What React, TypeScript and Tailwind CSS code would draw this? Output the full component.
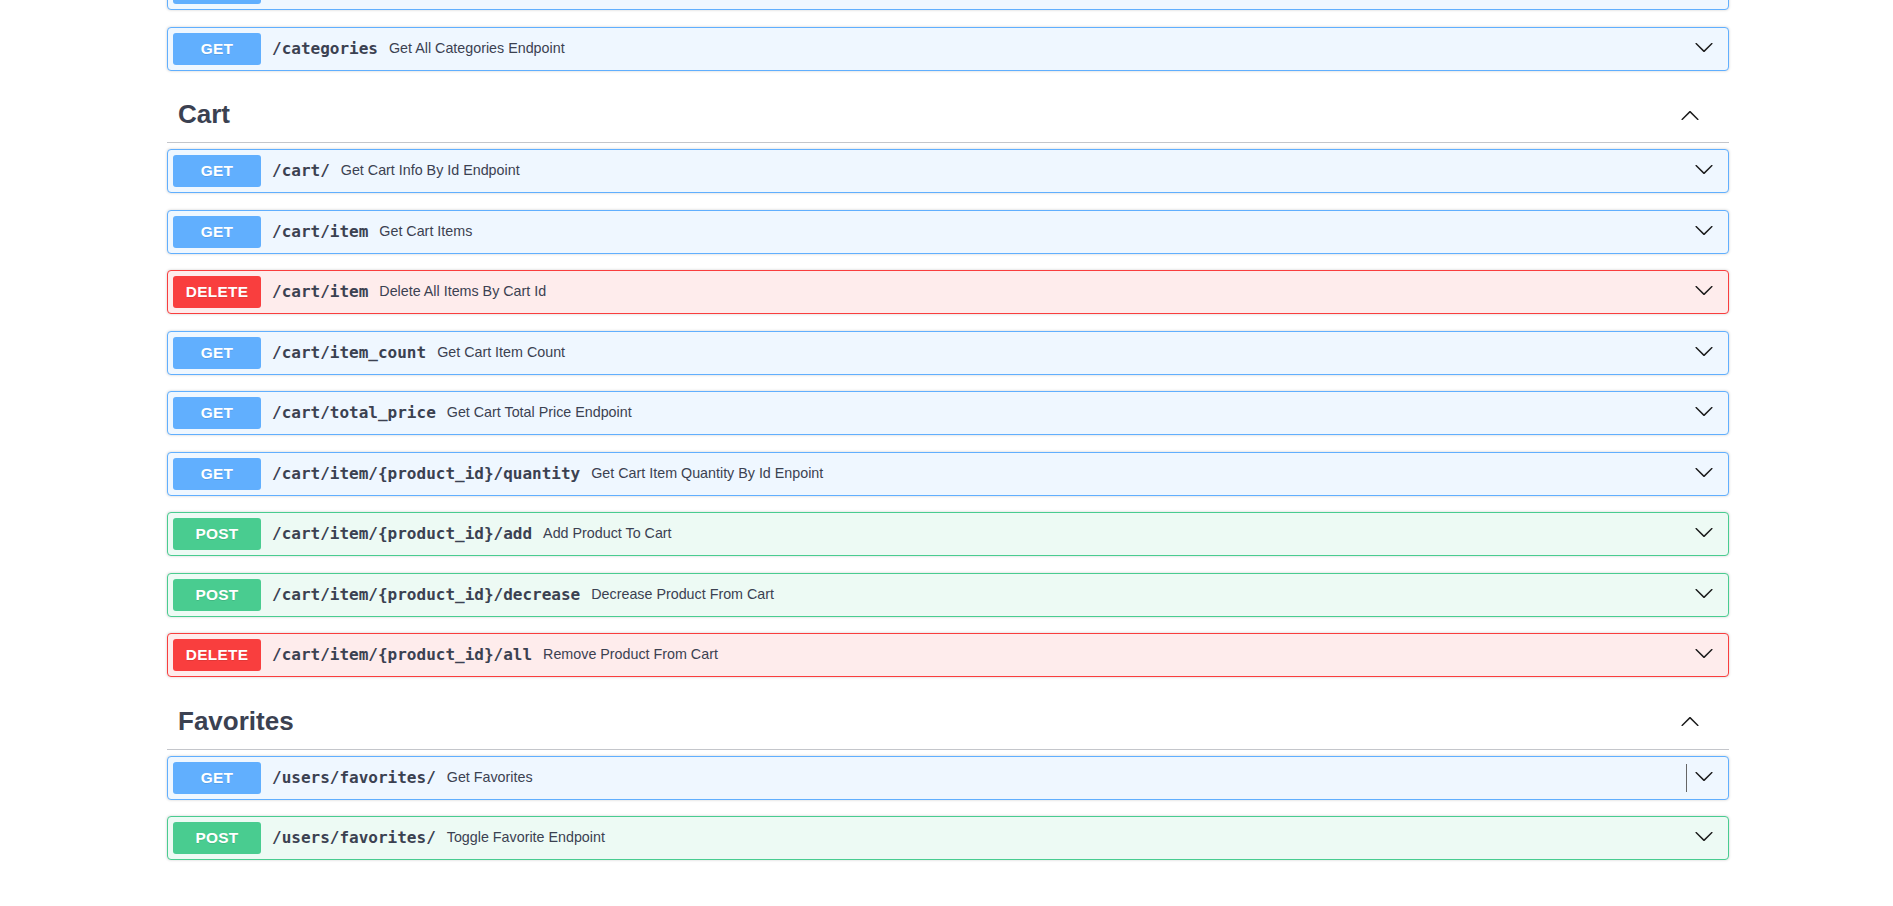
import React from "react";

type Method = "GET" | "POST" | "DELETE";

const styles: Record<Method, { block: string; btn: string }> = {
  GET: { block: "bg-[#eff7ff] border-[#61affe]", btn: "bg-[#61affe]" },
  POST: { block: "bg-[#edfaf4] border-[#49cc90]", btn: "bg-[#49cc90]" },
  DELETE: { block: "bg-[#feecec] border-[#f93e3e]", btn: "bg-[#f93e3e]" },
};

const ArrowDown = () => (
  <svg width="20" height="20" viewBox="0 0 20 20" className="shrink-0">
    <path
      fill="#1b1b1b"
      d="M17.418 6.109c.272-.268.709-.268.979 0s.271.701 0 .969l-7.908 7.83c-.27.268-.707.268-.979 0l-7.908-7.83c-.27-.268-.27-.701 0-.969.271-.268.709-.268.979 0L10 13.25l7.418-7.141z"
    />
  </svg>
);

const ArrowUp = () => (
  <svg width="20" height="20" viewBox="0 0 20 20" className="shrink-0">
    <path
      fill="#1b1b1b"
      d="M17.418 14.908c.272.268.709.268.979 0s.271-.701 0-.969l-7.908-7.83c-.27-.268-.707-.268-.979 0l-7.908 7.83c-.27.268-.27.701 0 .969.271.268.709.268.979 0L10 7.767l7.418 7.141z"
    />
  </svg>
);

type Op = { m: Method; path: string; desc: string; cursor?: boolean };

const Block = ({ op }: { op: Op }) => {
  const s = styles[op.m];
  return (
    <div
      className={`flex h-[44px] items-center rounded-[4px] border px-[5px] mb-[16.5px] shadow-[0_0_3px_rgba(0,0,0,0.19)] ${s.block}`}
    >
      <div
        className={`flex h-[32px] w-[88px] shrink-0 items-center justify-center rounded-[3px] text-[15.4px] font-bold tracking-[0.3px] text-white [text-shadow:0_1px_0_rgba(0,0,0,0.1)] ${s.btn}`}
        style={{ fontFamily: '"Liberation Sans", Arial, sans-serif' }}
      >
        {op.m}
      </div>
      <span
        className="pl-[11px] pr-[11px] text-[16px] font-bold text-[#3b4151] whitespace-nowrap"
        style={{ fontFamily: '"DejaVu Sans Mono", monospace' }}
      >
        {op.path}
      </span>
      <span
        className="flex-1 text-[14.3px] text-[#3b4151] whitespace-nowrap"
        style={{ fontFamily: '"Liberation Sans", Arial, sans-serif' }}
      >
        {op.desc}
      </span>
      {op.cursor && <div className="mr-[7px] h-[28px] w-px bg-[#666]" />}
      <div className="mr-[9px] mb-[4px] flex items-center">
        <ArrowDown />
      </div>
    </div>
  );
};

const PartialBlock = () => (
  <div className="mb-[16.5px] flex h-[44px] items-center rounded-[4px] border border-[#61affe] bg-[#eff7ff] px-[5px] shadow-[0_0_3px_rgba(0,0,0,0.19)]">
    <div className="h-[32px] w-[88px] shrink-0 rounded-[3px] bg-[#61affe]" />
  </div>
);

const Heading = ({ title }: { title: string }) => (
  <div className="mb-[6px] flex h-[56px] items-center border-b border-[#c4c6cb] pl-[11px] pr-[29px]">
    <span
      className="flex-1 text-[26px] font-bold text-[#3b4151]"
      style={{ fontFamily: '"Liberation Sans", Arial, sans-serif' }}
    >
      {title}
    </span>
    <ArrowUp />
  </div>
);

const cart: Op[] = [
  { m: "GET", path: "/cart/", desc: "Get Cart Info By Id Endpoint" },
  { m: "GET", path: "/cart/item", desc: "Get Cart Items" },
  { m: "DELETE", path: "/cart/item", desc: "Delete All Items By Cart Id" },
  { m: "GET", path: "/cart/item_count", desc: "Get Cart Item Count" },
  { m: "GET", path: "/cart/total_price", desc: "Get Cart Total Price Endpoint" },
  { m: "GET", path: "/cart/item/{product_id}/quantity", desc: "Get Cart Item Quantity By Id Enpoint" },
  { m: "POST", path: "/cart/item/{product_id}/add", desc: "Add Product To Cart" },
  { m: "POST", path: "/cart/item/{product_id}/decrease", desc: "Decrease Product From Cart" },
  { m: "DELETE", path: "/cart/item/{product_id}/all", desc: "Remove Product From Cart" },
];

const favorites: Op[] = [
  { m: "GET", path: "/users/favorites/", desc: "Get Favorites", cursor: true },
  { m: "POST", path: "/users/favorites/", desc: "Toggle Favorite Endpoint" },
];

export default function App() {
  return (
    <div className="h-[906px] w-full overflow-hidden bg-white pl-[3px]">
      <div className="mx-auto mt-[-34px] w-[1562px]">
        <PartialBlock />
        <Block op={{ m: "GET", path: "/categories", desc: "Get All Categories Endpoint" }} />
        <Heading title="Cart" />
        {cart.map((op, i) => (
          <Block key={i} op={op} />
        ))}
        <Heading title="Favorites" />
        {favorites.map((op, i) => (
          <Block key={i} op={op} />
        ))}
      </div>
    </div>
  );
}
